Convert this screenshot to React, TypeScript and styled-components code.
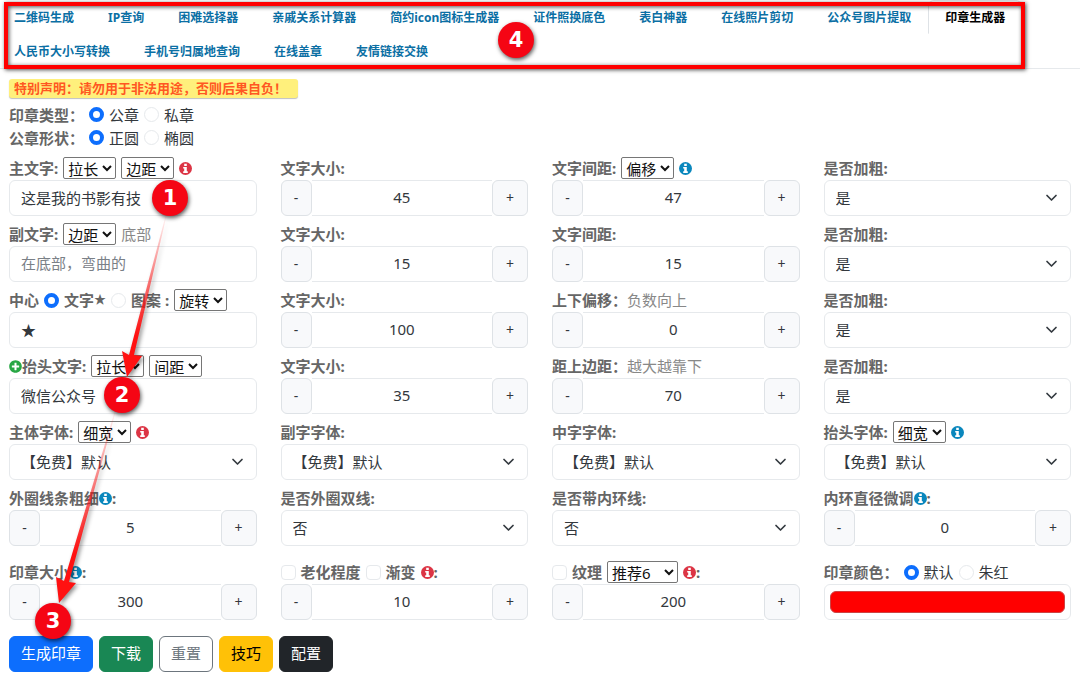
import React from "react";
import styled, { createGlobalStyle } from "styled-components";
import { FaPlusCircle } from "react-icons/fa";

const GlobalStyle = createGlobalStyle`
  *, *::before, *::after { box-sizing: border-box; }
  body {
    margin: 0;
    background: #fff;
    color: #33383d;
    font-family: "Noto Sans", "Noto Sans CJK SC", sans-serif;
    font-size: 15px;
    line-height: 24px;
  }
  button, input, select { font: inherit; color: inherit; margin: 0; }
`;

const Page = styled.div`
  position: relative;
`;

const Header = styled.header`
  position: relative;
`;

const Tabs = styled.nav`
  display: flex;
  flex-wrap: wrap;
  margin-left: -3px;
  border-bottom: 1px solid #e6e9ec;
`;

const Tab = styled.a<{ $active?: boolean }>`
  height: 34px;
  padding: 0 16px;
  border: 1px solid ${(p) => (p.$active ? "#dee2e6" : "transparent")};
  border-bottom-color: transparent;
  border-radius: 6px 6px 0 0;
  color: ${(p) => (p.$active ? "#000" : "#0b6fa4")};
  font-size: 12px;
  font-weight: 700;
  line-height: 34px;
  white-space: nowrap;
  text-decoration: none;
`;

const Frame = styled.div`
  position: absolute;
  inset: 2px 55px 0 4px;
  border: 4px solid #f00;
  box-shadow: 1px 1px 4px rgba(0, 0, 0, 0.7), inset 1px 1px 4px rgba(0, 0, 0, 0.7);
  pointer-events: none;
`;

const Main = styled.main`
  padding: 10px 9px 0;
`;

const Notice = styled.strong`
  display: block;
  width: fit-content;
  height: 19px;
  margin-bottom: 5px;
  padding: 0 11px 0 5px;
  border-radius: 3px;
  background: #fff07c;
  box-shadow: 0 1px 1px rgba(0, 0, 0, 0.25);
  color: #ff5722;
  font-size: 13px;
  line-height: 19px;
`;

const ChoiceRow = styled.div`
  display: flex;
  align-items: center;
  gap: 5px;
  height: 23px;
  line-height: 22px;
`;

const FieldGrid = styled.div`
  display: grid;
  grid-template-columns: repeat(4, minmax(0, 1fr));
  gap: 6px 24px;
  margin-top: 7px;
`;

const LastGrid = styled(FieldGrid)`
  margin-top: 14px;
`;

const Line = styled.div<{ $tight?: boolean }>`
  display: flex;
  align-items: center;
  gap: ${(p) => (p.$tight ? 0 : 5)}px;
  height: 24px;
  white-space: nowrap;
`;

const Caption = styled.label`
  display: inline-flex;
  align-items: center;
  color: #666;
  font-weight: 700;
`;

const Group = styled.span`
  color: #666;
  font-weight: 700;
`;

const Star = styled.span`
  font-size: 12px;
`;

const Option = styled.label`
  color: #33383d;
`;

const Hint = styled.span`
  color: #888;
`;

const Radio = styled.input.attrs({ type: "radio" })`
  appearance: none;
  flex: none;
  width: 15px;
  height: 15px;
  border: 1px solid #e6e9ec;
  border-radius: 50%;
  background: #fff;
  &:checked { border: 4px solid #0d6efd; }
`;

const Check = styled.input.attrs({ type: "checkbox" })`
  appearance: none;
  flex: none;
  width: 15px;
  height: 15px;
  border: 1px solid #e6e9ec;
  border-radius: 4px;
  background: #fff;
`;

const MiniSelect = styled.select<{ $wide?: boolean }>`
  width: ${(p) => (p.$wide ? 71 : 53)}px;
  height: 22px;
  padding: 0;
  border: 1px solid #767676;
  border-radius: 2px;
  background: #fff;
  color: #111;
  line-height: 20px;
`;

const TextBox = styled.input`
  display: block;
  width: 100%;
  height: 36px;
  padding: 0 11px 2px;
  border: 1px solid #e6e9ec;
  border-radius: 6px;
  background: #fff;
  &::placeholder { color: #7a8087; opacity: 1; }
`;

const SelectWrap = styled.div`
  position: relative;
  svg {
    position: absolute;
    top: 12px;
    right: 13px;
    pointer-events: none;
  }
`;

const WideSelect = styled.select`
  appearance: none;
  display: block;
  width: 100%;
  height: 36px;
  padding: 0 32px 0 11px;
  border: 1px solid #e6e9ec;
  border-radius: 6px;
  background: #fff;
`;

const Stepper = styled.div`
  display: flex;
  height: 36px;
`;

const StepButton = styled.button<{ $plus?: boolean }>`
  flex: none;
  width: ${(p) => (p.$plus ? 36 : 31)}px;
  padding: 0;
  border: 1px solid #dee2e6;
  border-radius: 6px;
  background: #f8f9fb;
  font-size: 14px;
`;

const StepInput = styled.input`
  flex: 1;
  min-width: 0;
  padding: 0 0 2px;
  border: solid #e6e9ec;
  border-width: 1px 0;
  background: #fff;
  text-align: center;
`;

const ColorBox = styled.input.attrs({ type: "color" })`
  appearance: none;
  display: block;
  width: 100%;
  height: 36px;
  padding: 6px 5px;
  border: 1px solid #e6e9ec;
  border-radius: 6px;
  background: #fff;
  &::-webkit-color-swatch-wrapper { padding: 0; }
  &::-webkit-color-swatch { border: 1px solid #c44; border-radius: 6px; }
`;

const Actions = styled.div`
  display: flex;
  gap: 6px;
  margin-top: 16px;
`;

const Action = styled.button<{ $bg: string; $fg: string; $line?: string }>`
  height: 36px;
  padding: 0 11px 2px;
  border: 1px solid ${(p) => p.$line ?? p.$bg};
  border-radius: 6px;
  background: ${(p) => p.$bg};
  color: ${(p) => p.$fg};
`;

const Arrows = styled.svg`
  position: absolute;
  top: 0;
  left: 0;
  pointer-events: none;
  filter: drop-shadow(2px 2px 2px rgba(0, 0, 0, 0.45));
`;

const Marker = styled.span<{ $x: number; $y: number }>`
  position: absolute;
  left: ${(p) => p.$x}px;
  top: ${(p) => p.$y}px;
  width: 36px;
  height: 36px;
  border-radius: 50%;
  background: #f50514;
  box-shadow: 1px 2px 4px rgba(0, 0, 0, 0.65);
  color: #fff;
  font-family: "DejaVu Sans", sans-serif;
  font-size: 21px;
  font-weight: 700;
  line-height: 36px;
  text-align: center;
`;

const RED = "#dc3545";
const BLUE = "#0a87bd";

const Info = ({ color }: { color: string }) => (
  <svg width="13" height="13" viewBox="0 0 13 13" aria-hidden="true">
    <circle cx="6.5" cy="6.5" r="6.5" fill={color} />
    <path fill="#fff" d="M5.2 1.8H7.8V4H5.2ZM4.2 4.9H7.8V9.3H8.8V11H4.2V9.3H5.2V6.6H4.2Z" />
  </svg>
);

type SelectProps = { id: string; value: string };

const SelectBox = ({ id, value }: SelectProps) => (
  <SelectWrap>
    <WideSelect id={id} defaultValue={value}>
      <option>{value}</option>
    </WideSelect>
    <svg width="13" height="12" viewBox="0 0 13 12" fill="none" stroke="#343a40" strokeWidth="1.7" strokeLinecap="round" strokeLinejoin="round">
      <path d="M2 3.5 6.5 8 11 3.5" />
    </svg>
  </SelectWrap>
);

const NumberBox = ({ id, value }: SelectProps) => (
  <Stepper>
    <StepButton type="button" aria-label="减少">-</StepButton>
    <StepInput id={id} inputMode="numeric" defaultValue={value} />
    <StepButton type="button" aria-label="增加" $plus>+</StepButton>
  </Stepper>
);

const Mini = ({ label, wide }: { label: string; wide?: boolean }) => (
  <MiniSelect aria-label={label} defaultValue={label} $wide={wide}>
    <option>{label}</option>
  </MiniSelect>
);

type FieldProps = {
  id: string;
  label: string;
  value: string;
  kind: "number" | "select" | "text";
  placeholder?: string;
  before?: React.ReactNode;
  info?: string;
  tight?: boolean;
  children?: React.ReactNode;
};

const Field = ({ id, label, value, kind, placeholder, before, info, tight, children }: FieldProps) => (
  <div>
    <Line $tight={tight}>
      <Caption htmlFor={id}>
        {before}
        {label}
        {info && <><Info color={info} />:</>}
      </Caption>
      {children}
    </Line>
    {kind === "number" && <NumberBox id={id} value={value} />}
    {kind === "select" && <SelectBox id={id} value={value} />}
    {kind === "text" && <TextBox id={id} defaultValue={value} placeholder={placeholder} />}
  </div>
);

const tabs = [
  "二维码生成", "IP查询", "困难选择器", "亲戚关系计算器", "简约icon图标生成器",
  "证件照换底色", "表白神器", "在线照片剪切", "公众号图片提取", "印章生成器",
  "人民币大小写转换", "手机号归属地查询", "在线盖章", "友情链接交换",
];

export default function App() {
  return (
    <Page>
      <GlobalStyle />
      <Header>
        <Tabs>
          {tabs.map((t) => (
            <Tab key={t} href="#" $active={t === "印章生成器"}>{t}</Tab>
          ))}
        </Tabs>
        <Frame />
      </Header>

      <Main>
        <Notice>特别声明：请勿用于非法用途，否则后果自负！</Notice>
        <ChoiceRow>
          <Group>印章类型：</Group>
          <Radio id="t1" name="type" defaultChecked />
          <Option htmlFor="t1">公章</Option>
          <Radio id="t2" name="type" />
          <Option htmlFor="t2">私章</Option>
        </ChoiceRow>
        <ChoiceRow>
          <Group>公章形状：</Group>
          <Radio id="s1" name="shape" defaultChecked />
          <Option htmlFor="s1">正圆</Option>
          <Radio id="s2" name="shape" />
          <Option htmlFor="s2">椭圆</Option>
        </ChoiceRow>

        <FieldGrid>
          <Field id="main" label="主文字:" kind="text" value="这是我的书影有技">
            <Mini label="拉长" />
            <Mini label="边距" />
            <Info color={RED} />
          </Field>
          <Field id="main-size" label="文字大小:" kind="number" value="45" />
          <Field id="main-gap" label="文字间距:" kind="number" value="47">
            <Mini label="偏移" />
            <Info color={BLUE} />
          </Field>
          <Field id="main-bold" label="是否加粗:" kind="select" value="是" />

          <Field id="sub" label="副文字:" kind="text" value="" placeholder="在底部，弯曲的">
            <Mini label="边距" />
            <Hint>底部</Hint>
          </Field>
          <Field id="sub-size" label="文字大小:" kind="number" value="15" />
          <Field id="sub-gap" label="文字间距:" kind="number" value="15" />
          <Field id="sub-bold" label="是否加粗:" kind="select" value="是" />

          <Field id="center" label="中心" kind="text" value="★">
            <Radio id="c1" name="center" defaultChecked />
            <Caption htmlFor="c1">文字<Star>★</Star></Caption>
            <Radio id="c2" name="center" />
            <Caption htmlFor="c2">图案&nbsp;:</Caption>
            <Mini label="旋转" />
          </Field>
          <Field id="center-size" label="文字大小:" kind="number" value="100" />
          <Field id="center-shift" label="上下偏移：" kind="number" value="0" tight>
            <Hint>负数向上</Hint>
          </Field>
          <Field id="center-bold" label="是否加粗:" kind="select" value="是" />

          <Field id="head" label="抬头文字:" kind="text" value="微信公众号" before={<FaPlusCircle size={13} color="#28a745" />}>
            <Mini label="拉长" />
            <Mini label="间距" />
          </Field>
          <Field id="head-size" label="文字大小:" kind="number" value="35" />
          <Field id="head-top" label="距上边距：" kind="number" value="70" tight>
            <Hint>越大越靠下</Hint>
          </Field>
          <Field id="head-bold" label="是否加粗:" kind="select" value="是" />

          <Field id="font-main" label="主体字体:" kind="select" value="【免费】默认">
            <Mini label="细宽" />
            <Info color={RED} />
          </Field>
          <Field id="font-sub" label="副字字体:" kind="select" value="【免费】默认" />
          <Field id="font-center" label="中字字体:" kind="select" value="【免费】默认" />
          <Field id="font-head" label="抬头字体:" kind="select" value="【免费】默认">
            <Mini label="细宽" />
            <Info color={BLUE} />
          </Field>

          <Field id="ring" label="外圈线条粗细" info={BLUE} kind="number" value="5" />
          <Field id="double" label="是否外圈双线:" kind="select" value="否" />
          <Field id="inner" label="是否带内环线:" kind="select" value="否" />
          <Field id="inner-d" label="内环直径微调" info={BLUE} kind="number" value="0" />
        </FieldGrid>

        <LastGrid>
          <Field id="size" label="印章大小" info={BLUE} kind="number" value="300" />
          <div>
            <Line>
              <Check id="aging" />
              <Caption htmlFor="aging">老化程度</Caption>
              <Check id="fade" />
              <Caption htmlFor="fade">渐变</Caption>
              <Caption htmlFor="aging-value" aria-label="老化数值"><Info color={RED} />:</Caption>
            </Line>
            <NumberBox id="aging-value" value="10" />
          </div>
          <div>
            <Line>
              <Check id="texture" />
              <Caption htmlFor="texture">纹理</Caption>
              <Mini label="推荐6" wide />
              <Caption htmlFor="texture-value" aria-label="纹理数值"><Info color={RED} />:</Caption>
            </Line>
            <NumberBox id="texture-value" value="200" />
          </div>
          <div>
            <Line>
              <Caption htmlFor="color">印章颜色：</Caption>
              <Radio id="k1" name="ink" defaultChecked />
              <Option htmlFor="k1">默认</Option>
              <Radio id="k2" name="ink" />
              <Option htmlFor="k2">朱红</Option>
            </Line>
            <ColorBox id="color" defaultValue="#ff0000" />
          </div>
        </LastGrid>

        <Actions>
          <Action type="button" $bg="#0d6efd" $fg="#fff">生成印章</Action>
          <Action type="button" $bg="#198754" $fg="#fff">下载</Action>
          <Action type="button" $bg="#fff" $fg="#6c757d" $line="#6c757d">重置</Action>
          <Action type="button" $bg="#ffc107" $fg="#000">技巧</Action>
          <Action type="button" $bg="#212529" $fg="#fff">配置</Action>
        </Actions>
      </Main>

      <Arrows width="240" height="640" viewBox="0 0 240 640" aria-hidden="true">
        <defs>
          <linearGradient id="g1" gradientUnits="userSpaceOnUse" x1="167" y1="212" x2="127" y2="377">
            <stop offset="0" stopColor="#f11" stopOpacity="0" />
            <stop offset="0.75" stopColor="#f11" />
          </linearGradient>
          <linearGradient id="g2" gradientUnits="userSpaceOnUse" x1="116" y1="405" x2="59" y2="603">
            <stop offset="0" stopColor="#f11" stopOpacity="0" />
            <stop offset="0.75" stopColor="#f11" />
          </linearGradient>
        </defs>
        <path fill="url(#g1)" d="M166 214 129 355 122 351 127 377 142 356 134 355 167 214Z" />
        <path fill="url(#g2)" d="M116 407 64 581 56 577 59 603 76 583 69 582 117 407Z" />
      </Arrows>
      <Marker $x={152} $y={180}>1</Marker>
      <Marker $x={104} $y={377}>2</Marker>
      <Marker $x={35} $y={603}>3</Marker>
      <Marker $x={498} $y={22}>4</Marker>
    </Page>
  );
}
